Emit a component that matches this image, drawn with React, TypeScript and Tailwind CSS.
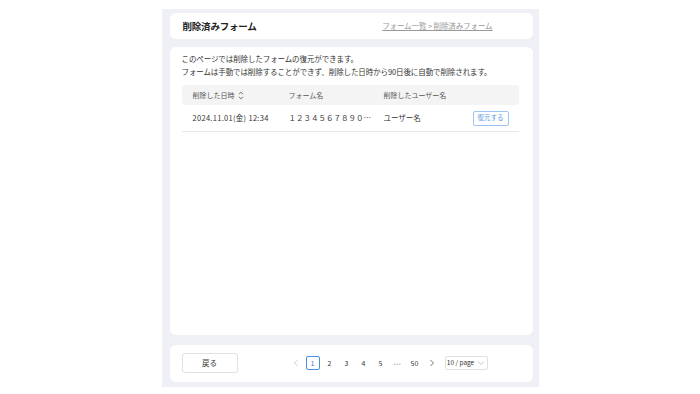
import React from "react";

const font = { fontFamily: '"Noto Sans CJK JP", "Noto Sans", sans-serif' };

function SortIcon() {
  return (
    <svg width="6" height="9" viewBox="0 0 6 9" className="ml-[3px]">
      <path d="M1 3.2 L3 1.2 L5 3.2" fill="none" stroke="#555" strokeWidth="0.9" />
      <path d="M1 5.8 L3 7.8 L5 5.8" fill="none" stroke="#555" strokeWidth="0.9" />
    </svg>
  );
}

function Chevron({ dir, color = "#aaa" }: { dir: "left" | "right" | "down"; color?: string }) {
  const d =
    dir === "left" ? "M4.5 1 L1.5 4 L4.5 7" : dir === "right" ? "M1.5 1 L4.5 4 L1.5 7" : "M1 2.5 L4 5.5 L7 2.5";
  const w = dir === "down" ? 8 : 6;
  return (
    <svg width={w} height="8" viewBox={`0 0 ${w} 8`}>
      <path d={d} fill="none" stroke={color} strokeWidth="0.9" />
    </svg>
  );
}

export default function App() {
  const pages = ["2", "3", "4", "5"];
  return (
    <div className="w-[700px] h-[394px] bg-white pt-[9px]" style={font}>
      <div className="mx-auto w-[377px] h-[378px] bg-[#eef0f5] pt-[4px] pl-[8px] pr-[6px] pb-[5px] flex flex-col">
        {/* header */}
        <div className="h-[26px] bg-white rounded-[6px] flex items-center justify-between pl-[13px] pr-[40px] shrink-0">
          <span className="text-[9.5px] font-bold text-[#222] tracking-[-0.2px]">削除済みフォーム</span>
          <span className="text-[7.5px] text-[#999] underline tracking-[-0.1px]">フォーム一覧 &gt; 削除済みフォーム</span>
        </div>

        {/* content */}
        <div className="mt-[8px] h-[288px] bg-white rounded-[6px] pt-[5px] pl-[12px] pr-[14px] shrink-0">
          <div className="text-[7.5px] leading-[13px] text-[#333] tracking-[-0.1px]">
            <p>このページでは削除したフォームの復元ができます。</p>
            <p>フォームは手動では削除することができず、削除した日時から90日後に自動で削除されます。</p>
          </div>
          <div className="mt-[7px]">
            <div className="h-[20px] bg-[#f4f4f5] rounded-[3px] flex items-center text-[7px] text-[#555]">
              <div className="w-[107px] pl-[11px] flex items-center">
                削除した日時
                <SortIcon />
              </div>
              <div className="w-[95px]">フォーム名</div>
              <div>削除したユーザー名</div>
            </div>
            <div className="h-[27px] border-b border-[#e8e8e8] flex items-center text-[7.5px] text-[#333]">
              <div className="w-[107px] pl-[11px] tracking-[0.3px]">2024.11.01(金) 12:34</div>
              <div className="w-[95px] whitespace-nowrap">１２３４５６７８９０…</div>
              <div className="w-[89px]">ユーザー名</div>
              <div className="w-[36px] h-[15px] border border-[#9cc5f3] rounded-[2px] text-[6.5px] text-[#5b9be6] flex items-center justify-center">
                復元する
              </div>
            </div>
          </div>
        </div>

        {/* footer */}
        <div className="mt-[10px] h-[37px] bg-white rounded-[6px] flex items-center pl-[12px] pb-[1px] shrink-0">
          <div className="w-[56px] h-[20px] border border-[#e0e0e0] rounded-[3px] flex items-center justify-center text-[7.5px] text-[#333]">
            戻る
          </div>
          <div className="ml-[51px] flex items-center gap-[3px] text-[7px] text-[#333]">
            <div className="w-[14px] h-[14px] flex items-center justify-center">
              <Chevron dir="left" color="#c4c4c4" />
            </div>
            <div className="w-[14px] h-[14px] border border-[#4a90e2] rounded-[2px] text-[#2f7de1] flex items-center justify-center">
              1
            </div>
            {pages.map((p) => (
              <div key={p} className="w-[14px] h-[14px] flex items-center justify-center">
                {p}
              </div>
            ))}
            <div className="w-[14px] h-[14px] flex items-center justify-center text-[#bbb] text-[6px] tracking-[0.5px]">
              •••
            </div>
            <div className="w-[14px] h-[14px] flex items-center justify-center">50</div>
            <div className="w-[14px] h-[14px] flex items-center justify-center">
              <Chevron dir="right" color="#666" />
            </div>
            <div className="ml-[3px] w-[43px] h-[14px] border border-[#e0e0e0] rounded-[2px] flex items-center justify-center gap-[3px] text-[6.5px]">
              10 / page
              <Chevron dir="down" color="#bbb" />
            </div>
          </div>
        </div>
      </div>
    </div>
  );
}
